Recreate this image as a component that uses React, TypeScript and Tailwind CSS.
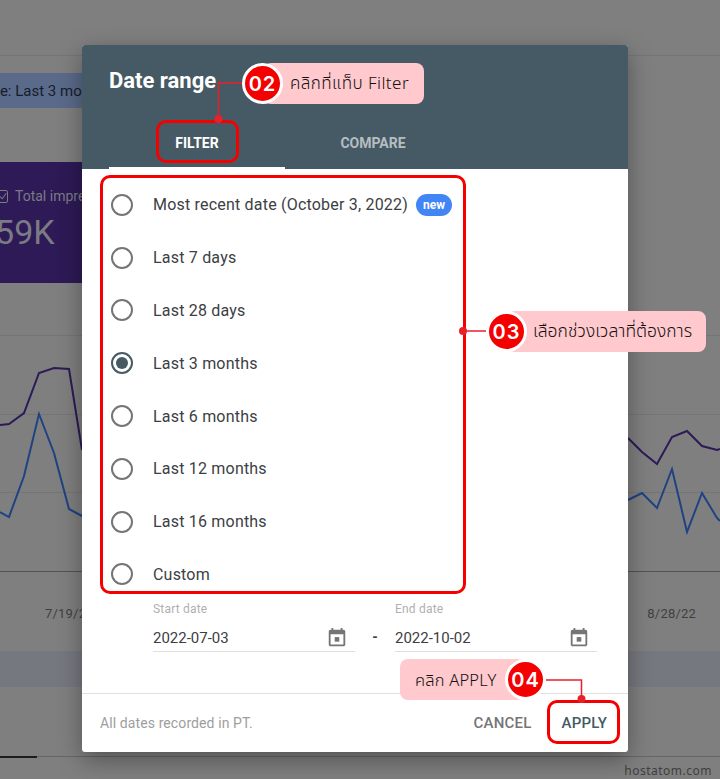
import React from 'react';

const ranges = ['Most recent date (October 3, 2022)', 'Last 7 days', 'Last 28 days', 'Last 3 months', 'Last 6 months', 'Last 12 months', 'Last 16 months', 'Custom'];

function CalendarIcon() {
  return (
    <svg viewBox="0 0 24 24" className="w-[22px] h-[22px] fill-[#757575]">
      <path d="M19 3h-1V1h-2v2H8V1H6v2H5c-1.11 0-2 .9-2 2v14c0 1.1.89 2 2 2h14c1.1 0 2-.9 2-2V5c0-1.1-.9-2-2-2zm0 16H5V8h14v11z" />
      <rect x="9.5" y="11" width="5" height="5" />
    </svg>
  );
}

function DateField({ label, value }: { label: string; value: string }) {
  return (
    <div className="w-[202px]">
      <div className="text-xs leading-[14px] text-[#b0b0b0] tracking-[0.2px]">{label}</div>
      <div className="mt-[6px] h-[30px] flex items-center justify-between border-b border-[#e0e0e0] pt-[3px]">
        <span className="text-[15px] text-[#3c4043]">{value}</span>
        <span className="mr-[7px]"><CalendarIcon /></span>
      </div>
    </div>
  );
}

function Radio({ checked }: { checked: boolean }) {
  return (
    <span className={`w-[22px] h-[22px] rounded-full border-2 flex items-center justify-center shrink-0 ${checked ? 'border-[#455a64]' : 'border-[#757575]'}`}>
      {checked && <span className="w-[12px] h-[12px] rounded-full bg-[#455a64]" />}
    </span>
  );
}

function Step({ n }: { n: string }) {
  return (
    <span className="relative z-10 w-[41px] h-[41px] rounded-full bg-[#f50000] border-[3px] border-white flex items-center justify-center text-white text-[20px] font-semibold tracking-[1px] font-['Inter',sans-serif] shrink-0">
      {n}
    </span>
  );
}

function Backdrop() {
  return (
    <div className="h-[779px] bg-[#7f7f80] overflow-hidden font-['Roboto',sans-serif]">
      <div className="h-[56px] border-b border-[#757577]" />
      <div className="mt-[17px] -ml-[31px] w-[113px] h-[35px] bg-[#5a6a8a] flex items-center pl-[8px] pt-[1px] whitespace-nowrap text-[15px] text-[#171c2b]">
        Date: Last 3 months
      </div>
      <div className="mt-[54px] w-[82px] h-[121px] bg-[#2d1a56] overflow-hidden pt-[24px] text-[#7b7a85] whitespace-nowrap">
        <div className="flex items-center gap-[7px] text-sm">
          <span className="w-[10px] h-[13px] border border-[#7b7a85] rounded-[2px] shrink-0 -ml-[2px] flex items-center justify-center">
            <svg viewBox="0 0 10 10" className="w-[8px] h-[8px]" fill="none" stroke="#7b7a85" strokeWidth="1.3"><path d="M1 5.5L4 8.5L9 1.5" /></svg>
          </span>
          Total impressions
        </div>
        <div className="-ml-[33px] mt-[6px] text-[34px] leading-[40px]">1.59K</div>
      </div>
      <svg viewBox="0 0 720 300" className="block w-[720px] h-[300px]" fill="none">
        <g stroke="#757577">
          <path d="M0 52.5H720M0 131.5H720M0 209.5H720" />
          <path d="M0 288.5H720" stroke="#535355" />
        </g>
        <path d="M0 142L9 141L24 130L39 90L54 85L69 86L82 167" stroke="#2d1a56" strokeWidth="2" />
        <path d="M0 229L9 234L24 193L39 131L54 170L69 226L82 233" stroke="#1f4382" strokeWidth="2" />
        <path d="M628 155L642 169L657 181L672 154L687 148L702 163L717 167L720 166" stroke="#2d1a56" strokeWidth="2" />
        <path d="M628 217L642 210L657 225L672 186L687 249L702 210L717 235L720 238" stroke="#1f4382" strokeWidth="2" />
      </svg>
      <div className="mt-[23px] h-[16px] flex justify-between pl-[45px] pr-[24px] text-[13px] leading-[16px] tracking-[0.2px] text-[#3f3f40]">
        <span>7/19/22</span>
        <span>8/28/22</span>
      </div>
      <div className="mt-[29px] h-[36px] bg-[#76787f]" />
      <div className="mt-[69px] h-px bg-[#666668]">
        <div className="w-[37px] h-[2px] bg-[#1c1c1c]" />
      </div>
      <div className="mt-[7px] pr-[8px] text-right text-[12px] leading-[14px] tracking-[0.5px] text-[#3f3f40] font-['Noto_Sans',sans-serif]">hostatom.com</div>
    </div>
  );
}

function Dialog() {
  return (
    <div className="absolute left-[82px] top-[45px] w-[546px] h-[707px] bg-white rounded-[3px] overflow-hidden shadow-[0_8px_24px_rgba(0,0,0,0.35)] font-['Roboto',sans-serif] flex flex-col">
      <div className="h-[124px] bg-[#455a64] pl-[27px] flex flex-col shrink-0">
        <div className="mt-[22px] text-[22px] leading-[28px] font-bold text-white">Date range</div>
        <div className="mt-[26px] flex text-sm font-bold">
          <div className="w-[176px] h-[48px] pt-[12px] text-center text-white border-b-2 border-white">FILTER</div>
          <div className="w-[176px] h-[48px] pt-[12px] text-center text-[#b6bdc1]">COMPARE</div>
        </div>
      </div>
      <div className="pl-[29px] pt-[9.5px] flex flex-col shrink-0">
        {ranges.map((label, i) => (
          <div key={label} className="h-[52.8px] flex items-center gap-[20px] text-base tracking-[0.2px] text-[#3c4043]">
            <Radio checked={i === 3} />
            <span className="pt-[1px]">{label}</span>
            {i === 0 && <span className="-ml-[12px] w-[36px] h-[22px] rounded-full bg-[#4285f4] text-white text-xs font-bold tracking-normal flex items-center justify-center">new</span>}
          </div>
        ))}
      </div>
      <div className="mt-[1px] pl-[71px] flex items-start shrink-0">
        <DateField label="Start date" value="2022-07-03" />
        <span className="w-[40px] pt-[25px] text-center text-sm font-bold text-[#3c4043]">-</span>
        <DateField label="End date" value="2022-10-02" />
      </div>
      <div className="mt-auto h-[59px] border-t border-[#e0e0e0] pl-[18px] pr-[21px] flex items-center justify-between">
        <span className="text-sm text-[#9e9e9e] tracking-[0.1px]">All dates recorded in PT.</span>
        <div className="flex gap-[30px] text-[15px] tracking-[0.2px] font-medium">
          <span className="text-[#757575]">CANCEL</span>
          <span className="text-[#455a64]">APPLY</span>
        </div>
      </div>
    </div>
  );
}

function Annotations() {
  const thai = "font-['Noto_Sans_Thai','Noto_Sans','DejaVu_Sans',sans-serif] font-light";
  return (
    <>
      <div className="absolute left-[156px] top-[120px] w-[83px] h-[43px] border-[3px] border-[#f50000] rounded-[10px]" />
      <div className="absolute left-[100px] top-[175px] w-[366px] h-[419px] border-[3px] border-[#f50000] rounded-[10px]" />
      <div className="absolute left-[547px] top-[700px] w-[73px] h-[44px] border-[3px] border-[#f50000] rounded-[10px]" />

      <svg className="absolute left-0 top-0 w-[720px] h-[779px] pointer-events-none" viewBox="0 0 720 779" fill="none">
        <path d="M243 83H218.5V119" stroke="#e8202c" strokeWidth="1.5" />
        <circle cx="218.5" cy="119" r="4" fill="#e8202c" />
        <path d="M463 331H488" stroke="#e8202c" strokeWidth="1.5" />
        <circle cx="463" cy="331" r="4" fill="#e8202c" />
        <path d="M546 680H581.5V699" stroke="#e8202c" strokeWidth="1.5" />
        <circle cx="581.5" cy="699" r="4" fill="#e8202c" />
      </svg>

      <div className="absolute left-[242px] top-[63px] flex items-center text-[#111]">
        <Step n="02" />
        <span className={`${thai} -ml-[20px] w-[161px] h-[41px] pl-[27px] pt-[2px] flex items-center bg-[#ffc9ce] rounded-[8px] text-[17px] tracking-[0.45px] whitespace-nowrap`}>คลิกที่แท็บ Filter</span>
      </div>
      <div className="absolute left-[486px] top-[311px] flex items-center text-[#111]">
        <Step n="03" />
        <span className={`${thai} -ml-[20px] w-[199px] h-[41px] pl-[26px] pt-[2px] flex items-center bg-[#ffc9ce] rounded-[8px] text-[17.5px] whitespace-nowrap`}>เลือกช่วงเวลาที่ต้องการ</span>
      </div>
      <div className="absolute left-[400px] top-[659px] flex items-center text-[#111]">
        <span className={`${thai} -mr-[20px] w-[125px] h-[41px] pl-[15px] pt-[3px] flex items-center bg-[#ffc9ce] rounded-[8px] text-[16.5px] tracking-[0.2px] whitespace-nowrap`}>คลิก APPLY</span>
        <Step n="04" />
      </div>
    </>
  );
}

export default function App() {
  return (
    <div className="relative w-[720px] h-[779px] overflow-hidden">
      <Backdrop />
      <Dialog />
      <Annotations />
    </div>
  );
}
